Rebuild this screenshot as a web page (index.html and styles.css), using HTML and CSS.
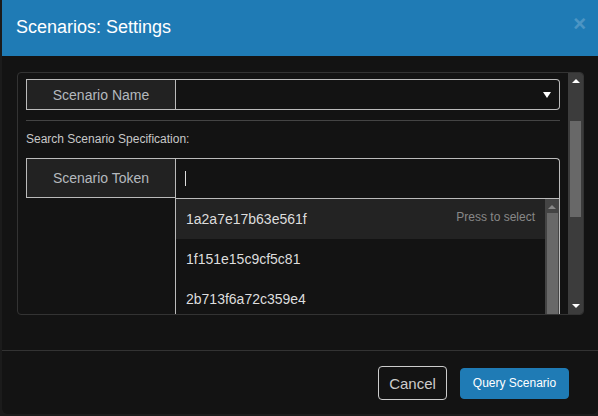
FILE: index.html
```html
<!DOCTYPE html>
<html lang="en">
<head>
    <meta charset="UTF-8">
    <title>Scenarios: Settings</title>
    <link rel="stylesheet" href="styles.css">
</head>
<body>
    <div class="modal">
        <div class="modal-header">
            <h4 class="modal-title">Scenarios: Settings</h4>
            <span class="close">&times;</span>
        </div>
        <div class="modal-body">
            <div class="panel">
                <div class="panel-content">
                    <div class="input-group">
                        <span class="addon addon-name">Scenario Name</span>
                        <div class="select-box"><span class="caret"></span></div>
                    </div>
                    <hr>
                    <p class="search-label">Search Scenario Specification:</p>
                    <div class="input-group token-group">
                        <span class="addon addon-token">Scenario Token</span>
                        <div class="token-input"><span class="cursor"></span></div>
                    </div>
                    <div class="token-row">
                        <div class="spacer"></div>
                        <div class="dropdown">
                            <ul class="token-list">
                                <li class="active"><span>1a2a7e17b63e561f</span><span class="hint">Press to select</span></li>
                                <li><span>1f151e15c9cf5c81</span></li>
                                <li><span>2b713f6a72c359e4</span></li>
                            </ul>
                            <div class="scrollbar small">
                                <span class="arrow-up"></span>
                                <div class="thumb"></div>
                            </div>
                        </div>
                    </div>
                </div>
                <div class="scrollbar big">
                    <span class="arrow-up"></span>
                    <div class="thumb"></div>
                    <span class="arrow-down"></span>
                </div>
            </div>
        </div>
        <div class="modal-footer">
            <button class="btn btn-cancel">Cancel</button>
            <button class="btn btn-primary">Query Scenario</button>
        </div>
    </div>
</body>
</html>
```

FILE: styles.css
```css
body {
    margin: 0;
    background-color: #1b1b1b;
    font-family: "Liberation Sans", Arial, sans-serif;
    color: #ccc;
}

.modal {
    margin-left: 2px;
    height: 414px;
    background-color: #131313;
    border-radius: 0 0 6px 6px;
    display: flex;
    flex-direction: column;
}

.modal-header {
    height: 54px;
    background-color: #1f7bb5;
    display: flex;
    align-items: center;
    justify-content: space-between;
    padding: 0 12px 2px 14px;
}

.modal-title {
    margin: 0;
    font-size: 18px;
    font-weight: normal;
    color: #fff;
}

.close {
    font-size: 22px;
    font-weight: bold;
    color: #fff;
    opacity: 0.2;
    margin-top: -6px;
}

.modal-body {
    padding: 16px 14px 0 15px;
}

.panel {
    height: 241px;
    border: 1px solid #333;
    border-radius: 4px;
    display: flex;
    overflow: hidden;
}

.panel-content {
    flex: 1;
    padding: 6px 8px 0 8px;
    overflow: hidden;
}

.input-group {
    display: flex;
    height: 31px;
}

.addon {
    width: 148px;
    border: 1px solid #bbb;
    background-color: #222;
    color: #b4b9be;
    font-size: 14px;
    display: flex;
    align-items: center;
    justify-content: center;
}

.select-box {
    flex: 1;
    border: 1px solid #bbb;
    border-left: none;
    border-radius: 0 4px 4px 0;
    position: relative;
}

.caret {
    position: absolute;
    right: 8px;
    top: 12px;
    border-left: 4px solid transparent;
    border-right: 4px solid transparent;
    border-top: 6px solid #fff;
}

hr {
    border: none;
    border-top: 1px solid #444;
    margin: 10px 0 0 0;
}

.search-label {
    margin: 11px 0 0 0;
    font-size: 12px;
    color: #c8c8c8;
    height: 17px;
}

.token-group {
    margin-top: 9px;
    height: 40px;
}

.token-input {
    flex: 1;
    border: 1px solid #bbb;
    border-left: none;
    border-bottom: none;
    border-radius: 0 4px 0 0;
    display: flex;
    align-items: center;
    padding-left: 9px;
}

.cursor {
    width: 1px;
    height: 15px;
    background-color: #ddd;
}

.token-row {
    display: flex;
}

.spacer {
    width: 149px;
}

.dropdown {
    flex: 1;
    display: flex;
    border-left: 1px solid #bbb;
    border-right: 1px solid #bbb;
    border-top: 1px solid #bbb;
    height: 140px;
}

.token-list {
    flex: 1;
    list-style: none;
    margin: 0;
    padding: 0;
}

.token-list li {
    height: 40px;
    display: flex;
    align-items: center;
    justify-content: space-between;
    padding: 0 10px;
    font-size: 14px;
    color: #ddd;
}

.token-list li.active {
    background-color: #232323;
}

.hint {
    font-size: 12px;
    color: #888;
    margin-top: -4px;
}

.scrollbar {
    background-color: #3c3c3c;
    display: flex;
    flex-direction: column;
    align-items: center;
    position: relative;
}

.scrollbar.big {
    width: 15px;
}

.scrollbar.small {
    width: 14px;
    background-color: #444;
}

.thumb {
    background-color: #686868;
}

.big .thumb {
    width: 11px;
    height: 96px;
    margin-top: 38px;
}

.small .thumb {
    width: 11px;
    height: 110px;
    margin-top: 4px;
}

.arrow-up {
    margin-top: 6px;
    border-left: 4px solid transparent;
    border-right: 4px solid transparent;
    border-bottom: 4px solid #fff;
}

.small .arrow-up {
    border-bottom-color: #888;
}

.arrow-down {
    position: absolute;
    bottom: 6px;
    border-left: 4px solid transparent;
    border-right: 4px solid transparent;
    border-top: 4px solid #fff;
}

.modal-footer {
    margin-top: 35px;
    border-top: 1px solid #333;
    display: flex;
    justify-content: flex-end;
    align-items: center;
    padding: 15px 29px 0 0;
    gap: 13px;
}

.btn {
    font-family: "Liberation Sans", Arial, sans-serif;
    border-radius: 4px;
    cursor: pointer;
}

.btn-cancel {
    background-color: transparent;
    border: 1px solid #ccc;
    color: #ccc;
    font-size: 15px;
    height: 34px;
    width: 69px;
}

.btn-primary {
    background-color: #1f7bb5;
    border: 1px solid #1f7bb5;
    color: #fff;
    font-size: 12px;
    height: 31px;
    width: 109px;
}
```
